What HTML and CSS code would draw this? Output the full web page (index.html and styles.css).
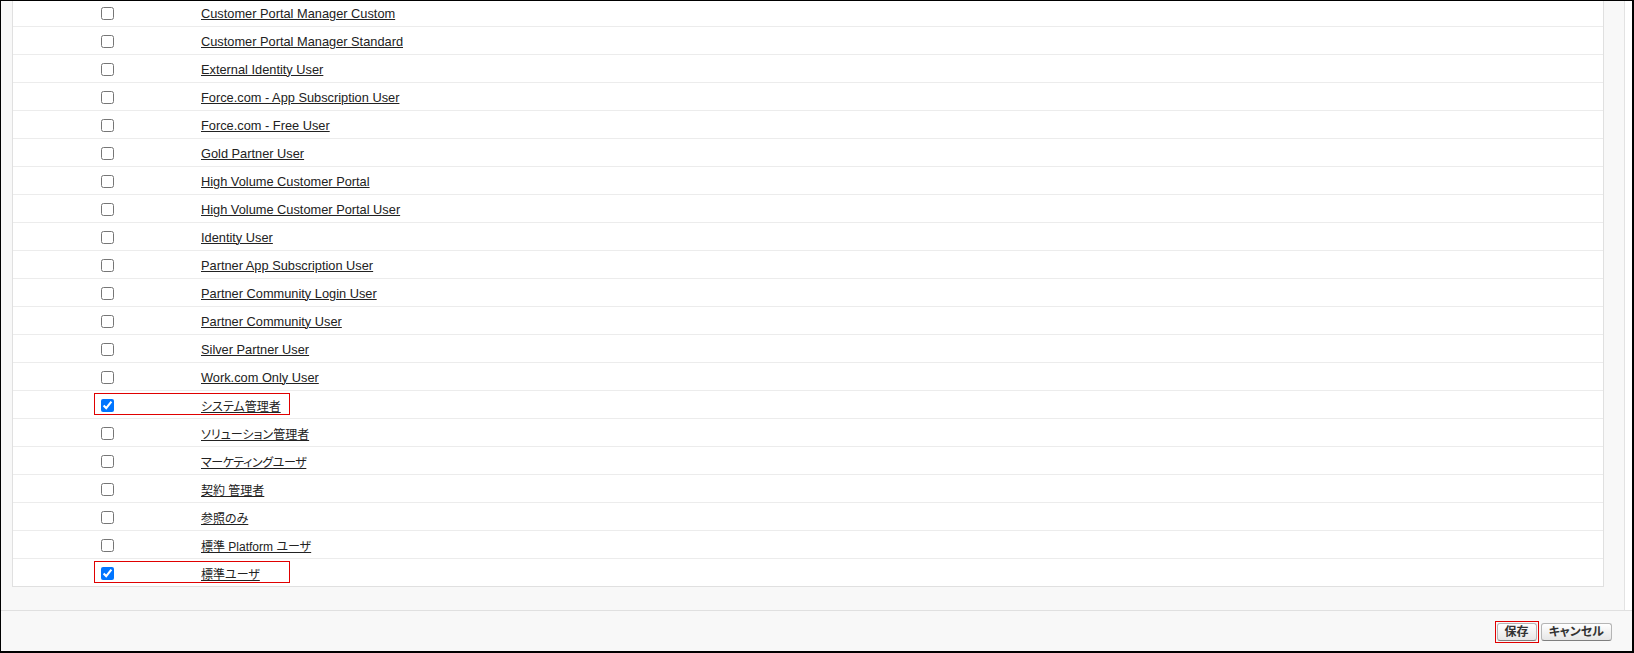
FILE: index.html
```html
<!DOCTYPE HTML>
<html>

<head>
   <meta charset="utf-8" />
   <title>プロファイル選択</title>
   <link rel="stylesheet" href="styles.css">
</head>

<body>

   <div class="frame">
      <div class="main">
         <div class="panel">
            <div class="list">
               <div class="row"><span class="cell-check"><input type="checkbox" /></span><a href="#">Customer Portal Manager Custom</a></div>
               <div class="row"><span class="cell-check"><input type="checkbox" /></span><a href="#">Customer Portal Manager Standard</a></div>
               <div class="row"><span class="cell-check"><input type="checkbox" /></span><a href="#">External Identity User</a></div>
               <div class="row"><span class="cell-check"><input type="checkbox" /></span><a href="#">Force.com - App Subscription User</a></div>
               <div class="row"><span class="cell-check"><input type="checkbox" /></span><a href="#">Force.com - Free User</a></div>
               <div class="row"><span class="cell-check"><input type="checkbox" /></span><a href="#">Gold Partner User</a></div>
               <div class="row"><span class="cell-check"><input type="checkbox" /></span><a href="#">High Volume Customer Portal</a></div>
               <div class="row"><span class="cell-check"><input type="checkbox" /></span><a href="#">High Volume Customer Portal User</a></div>
               <div class="row"><span class="cell-check"><input type="checkbox" /></span><a href="#">Identity User</a></div>
               <div class="row"><span class="cell-check"><input type="checkbox" /></span><a href="#">Partner App Subscription User</a></div>
               <div class="row"><span class="cell-check"><input type="checkbox" /></span><a href="#">Partner Community Login User</a></div>
               <div class="row"><span class="cell-check"><input type="checkbox" /></span><a href="#">Partner Community User</a></div>
               <div class="row"><span class="cell-check"><input type="checkbox" /></span><a href="#">Silver Partner User</a></div>
               <div class="row"><span class="cell-check"><input type="checkbox" /></span><a href="#">Work.com Only User</a></div>
               <!-- marked rows get the red annotation box -->
               <div class="row marked"><span class="cell-check"><input type="checkbox" checked /></span><a href="#" class="ja">システム管理者</a></div>
               <div class="row"><span class="cell-check"><input type="checkbox" /></span><a href="#" class="ja">ソリューション管理者</a></div>
               <div class="row"><span class="cell-check"><input type="checkbox" /></span><a href="#" class="ja tight">マーケティングユーザ</a></div>
               <div class="row"><span class="cell-check"><input type="checkbox" /></span><a href="#" class="ja">契約 管理者</a></div>
               <div class="row"><span class="cell-check"><input type="checkbox" /></span><a href="#" class="ja">参照のみ</a></div>
               <div class="row"><span class="cell-check"><input type="checkbox" /></span><a href="#" class="ja">標準 Platform ユーザ</a></div>
               <div class="row marked"><span class="cell-check"><input type="checkbox" checked /></span><a href="#" class="ja">標準ユーザ</a></div>
            </div>
         </div>
         <div class="strip"></div>
      </div>
      <div class="footer">
         <span class="mark-box"><input type="button" class="btn" value="保存" /></span>
         <input type="button" class="btn" value="キャンセル" />
      </div>
   </div>

</body>

</html>
```

FILE: styles.css
```css
body {
   margin: 0;
   background-color: white;
   font-family: 'Liberation Sans', 'Noto Sans CJK JP', sans-serif;
   font-size: 12.8px;
   font-feature-settings: "palt";
   color: #222;
}
.frame {
   width: 1634px;
   height: 653px;
   box-sizing: border-box;
   border-top: 1px solid black;
   border-left: 1px solid black;
   border-right: 2px solid black;
   border-bottom: 2px solid black;
   display: flex;
   flex-direction: column;
   background-color: #f8f8f8;
}
.main {
   display: flex;
   height: 609px;
}
.panel {
   width: 1623px;
   box-sizing: border-box;
   padding: 0 20px 0 11px;
   overflow: hidden;
}
.strip {
   flex: 1;
   border-left: 1px solid #e3e3e3;
   background-color: white;
}
.list {
   margin-top: -3px;
   border: 1px solid #e0e0e0;
   background-color: white;
}
.row {
   display: grid;
   grid-template-columns: 188px 1fr;
   align-items: center;
   height: 28px;
   box-sizing: border-box;
   border-bottom: 1px solid #ececec;
   position: relative;
}
.row:last-child {
   border-bottom: none;
   height: 27px;
}
.row.marked::after {
   content: "";
   position: absolute;
   left: 81px;
   top: 2px;
   width: 196px;
   height: 22px;
   box-sizing: border-box;
   border: 1px solid #e00000;
}
.cell-check {
   padding-left: 88px;
   display: flex;
   align-items: center;
}
.cell-check input {
   margin: 1px 0 0 0;
   width: 13px;
   height: 13px;
}
.row a {
   color: #222;
   text-decoration: underline;
   padding-top: 1px;
}
.row a.ja {
   font-size: 12px;
}
.row a.tight {
   letter-spacing: -0.4px;
}
.footer {
   flex: 1;
   border-top: 1px solid #e0e0e0;
   display: flex;
   justify-content: flex-end;
   align-items: flex-start;
   gap: 2px;
   padding: 10px 20px 0 0;
}
.mark-box {
   display: flex;
   padding: 1px;
   border: 1px solid #e00000;
}
.btn {
   font-family: 'Liberation Sans', 'Noto Sans CJK JP', sans-serif;
   font-feature-settings: "palt";
   font-size: 12px;
   font-weight: bold;
   color: #333;
   height: 18px;
   padding: 0 7px;
   line-height: 14px;
   border: 1px solid #b5b5b5;
   border-bottom-color: #7f7f7f;
   border-radius: 3px;
   background: linear-gradient(#ffffff, #e6e6e6);
   margin: 0;
}
.footer > .btn {
   margin-top: 2px;
}
```
